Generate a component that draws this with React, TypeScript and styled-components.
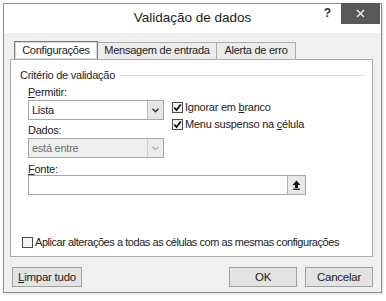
import React from 'react';
import styled, { createGlobalStyle } from 'styled-components';

const GlobalStyle = createGlobalStyle`
  html, body {
    margin: 0;
    padding: 0;
    background: #ffffff;
    font-family: "Liberation Sans", Arial, sans-serif;
    color: #1e1e1e;
  }
`;

const Page = styled.div`
  width: 386px;
  height: 301px;
  padding: 3px 0 0 3px;
  box-sizing: border-box;
`;

const Window = styled.div`
  width: 379px;
  height: 290px;
  box-sizing: border-box;
  border: 1px solid #8c8c8c;
  background: #f0f0f0;
  display: flex;
  flex-direction: column;
  box-shadow: 1px 1px 2px rgba(0, 0, 0, 0.15);
`;

const TitleBar = styled.div`
  height: 29px;
  background: #ffffff;
  display: grid;
  grid-template-columns: 1fr auto 1fr;
  align-items: start;
`;

const Title = styled.div`
  grid-column: 2;
  font-size: 13.5px;
  line-height: 28px;
  color: #222;
`;

const TitleControls = styled.div`
  grid-column: 3;
  display: flex;
  justify-content: flex-end;
  align-items: flex-start;
  gap: 10px;
  margin-top: -1px;
  margin-right: 1px;
`;

const Help = styled.span`
  font-size: 12px;
  font-weight: bold;
  line-height: 21px;
  color: #333;
`;

const CloseButton = styled.div`
  width: 39px;
  height: 21px;
  background: #585858;
  display: flex;
  align-items: center;
  justify-content: center;
`;

const Body = styled.div`
  flex: 1;
  display: flex;
  flex-direction: column;
  padding: 8px 8px 0 6px;
  font-size: 11px;
  letter-spacing: -0.25px;
`;

const Tabs = styled.div`
  display: flex;
  align-items: flex-end;
  padding-left: 4px;
  height: 18px;
`;

const Tab = styled.div<{ $active?: boolean; $width: number }>`
  width: ${(p) => p.$width}px;
  height: ${(p) => (p.$active ? 18 : 17)}px;
  box-sizing: border-box;
  text-align: center;
  white-space: nowrap;
  line-height: ${(p) => (p.$active ? 16 : 15)}px;
  border: 1px solid ${(p) => (p.$active ? '#7a7a7a' : '#acacac')};
  border-bottom: none;
  margin-right: -1px;
  background: ${(p) => (p.$active ? '#ffffff' : '#ececec')};
  color: #222;
  position: relative;
  z-index: ${(p) => (p.$active ? 1 : 0)};
  box-shadow: ${(p) => (p.$active ? 'inset 0 0 0 1px #d8d8d8' : 'none')};
`;

const Panel = styled.div`
  height: 198px;
  box-sizing: border-box;
  border: 1px solid #acacac;
  background: #ffffff;
  padding: 8px 7px 0 9px;
  display: flex;
  flex-direction: column;
`;

const GroupHeader = styled.div`
  display: flex;
  align-items: center;
  gap: 5px;
  height: 14px;
  &::after {
    content: '';
    flex: 1;
    height: 1px;
    background: #dcdcdc;
  }
`;

const Criteria = styled.div`
  display: flex;
  padding-left: 8px;
  margin-top: 1px;
`;

const LeftCol = styled.div`
  width: 136px;
  display: flex;
  flex-direction: column;
`;

const RightCol = styled.div`
  display: flex;
  flex-direction: column;
  gap: 4px;
  padding-top: 18px;
  margin-left: 8px;
`;

const FieldLabel = styled.div`
  line-height: 12px;
  height: 12px;
  margin-top: 3px;
  color: #222;
`;

const Select = styled.div<{ $disabled?: boolean }>`
  width: 136px;
  height: 20px;
  box-sizing: border-box;
  border: 1px solid #a8a8a8;
  background: ${(p) => (p.$disabled ? '#efefef' : '#ffffff')};
  display: flex;
  align-items: stretch;
  margin-top: 2px;
  margin-bottom: 1px;
`;

const SelectValue = styled.div<{ $disabled?: boolean }>`
  flex: 1;
  line-height: 18px;
  padding-left: 3px;
  color: ${(p) => (p.$disabled ? '#6d6d6d' : '#1e1e1e')};
`;

const SelectArrow = styled.div<{ $disabled?: boolean }>`
  width: 15px;
  border-left: 1px solid ${(p) => (p.$disabled ? '#cfcfcf' : '#b8b8b8')};
  background: ${(p) => (p.$disabled ? '#ececec' : '#e6e6e6')};
  display: flex;
  align-items: center;
  justify-content: center;
`;

const CheckRow = styled.label`
  display: flex;
  align-items: center;
  gap: 2px;
  line-height: 13px;
  white-space: nowrap;
  color: #222;
`;

const Box = styled.span`
  width: 11px;
  height: 11px;
  flex: none;
  box-sizing: border-box;
  border: 1px solid #4a4a4a;
  background: #f4f4f4;
  display: flex;
  align-items: center;
  justify-content: center;
`;

const SourceField = styled.div`
  width: 278px;
  height: 20px;
  box-sizing: border-box;
  border: 1px solid #a8a8a8;
  background: #ffffff;
  display: flex;
  justify-content: flex-end;
`;

const PickerButton = styled.div`
  width: 17px;
  border-left: 1px solid #b0b0b0;
  background: #e8e8e8;
  display: flex;
  align-items: center;
  justify-content: center;
`;

const ApplyRow = styled(CheckRow)`
  margin-top: auto;
  margin-bottom: 7px;
  margin-left: 2px;
  letter-spacing: -0.45px;
`;

const Footer = styled.div`
  display: flex;
  align-items: center;
  padding: 10px 0 0 2px;
  gap: 8px;
`;

const Button = styled.div<{ $wide?: boolean }>`
  width: ${(p) => (p.$wide ? 70 : 68)}px;
  height: 20px;
  box-sizing: border-box;
  border: 1px solid #a0a0a0;
  background: #e3e3e3;
  font-size: 11.5px;
  line-height: 18px;
  text-align: center;
  color: #222;
`;

const Spacer = styled.div`
  flex: 1;
`;

const Key = styled.span`
  text-decoration: underline;
`;

const Chevron: React.FC<{ color: string }> = ({ color }) => (
  <svg width="7" height="5" viewBox="0 0 7 5">
    <path d="M0.5 0.8 L3.5 3.8 L6.5 0.8" fill="none" stroke={color} strokeWidth="1.4" />
  </svg>
);

const Check = () => (
  <svg width="9" height="9" viewBox="0 0 9 9">
    <path d="M1.2 4.5 L3.5 7 L7.8 1.5" fill="none" stroke="#111" strokeWidth="1.8" />
  </svg>
);

const CheckItem: React.FC<{ checked?: boolean; children: React.ReactNode }> = ({ checked, children }) => (
  <CheckRow>
    <Box>{checked && <Check />}</Box>
    <span>{children}</span>
  </CheckRow>
);

const App: React.FC = () => {
  return (
    <Page>
      <GlobalStyle />
      <Window>
        <TitleBar>
          <Title>Validação de dados</Title>
          <TitleControls>
            <Help>?</Help>
            <CloseButton>
              <svg width="9" height="9" viewBox="0 0 9 9">
                <path d="M1 1 L8 8 M8 1 L1 8" stroke="#e8e8e8" strokeWidth="1.5" />
              </svg>
            </CloseButton>
          </TitleControls>
        </TitleBar>
        <Body>
          <Tabs>
            <Tab $active $width={84}>Configurações</Tab>
            <Tab $width={120}>Mensagem de entrada</Tab>
            <Tab $width={80}>Alerta de erro</Tab>
          </Tabs>
          <Panel>
            <GroupHeader>Critério de validação</GroupHeader>
            <Criteria>
              <LeftCol>
                <FieldLabel>
                  <Key>P</Key>ermitir:
                </FieldLabel>
                <Select>
                  <SelectValue>Lista</SelectValue>
                  <SelectArrow>
                    <Chevron color="#333" />
                  </SelectArrow>
                </Select>
                <FieldLabel>Dados:</FieldLabel>
                <Select $disabled>
                  <SelectValue $disabled>está entre</SelectValue>
                  <SelectArrow $disabled>
                    <Chevron color="#b0b0b0" />
                  </SelectArrow>
                </Select>
              </LeftCol>
              <RightCol>
                <CheckItem checked>
                  Ignorar em <Key>b</Key>ranco
                </CheckItem>
                <CheckItem checked>
                  Menu suspenso na <Key>c</Key>élula
                </CheckItem>
              </RightCol>
            </Criteria>
            <Criteria>
              <div>
                <FieldLabel>
                  <Key>F</Key>onte:
                </FieldLabel>
                <SourceField>
                  <PickerButton>
                    <svg width="9" height="10" viewBox="0 0 9 10">
                      <path d="M4.5 0.5 L8.5 5 L6 5 L6 8 L3 8 L3 5 L0.5 5 Z" fill="#111" />
                      <rect x="1" y="8.6" width="7" height="1.2" fill="#111" />
                    </svg>
                  </PickerButton>
                </SourceField>
              </div>
            </Criteria>
            <ApplyRow>
              <Box />
              <span>Aplicar alterações a todas as células com as mesmas configurações</span>
            </ApplyRow>
          </Panel>
          <Footer>
            <Button $wide>
              <Key>L</Key>impar tudo
            </Button>
            <Spacer />
            <Button>OK</Button>
            <Button>Cancelar</Button>
          </Footer>
        </Body>
      </Window>
    </Page>
  );
};

export default App;
